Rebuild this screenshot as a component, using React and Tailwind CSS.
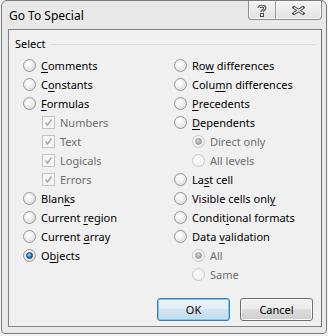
const left = [
  { label: "Comments", key: 0 },
  { label: "Constants", key: 1 },
  { label: "Formulas", key: 0 },
  { label: "Numbers", check: true },
  { label: "Text", check: true },
  { label: "Logicals", check: true },
  { label: "Errors", check: true },
  { label: "Blanks", key: 4 },
  { label: "Current region", key: 8 },
  { label: "Current array", key: 8 },
  { label: "Objects", key: 1, on: true },
];

const right = [
  { label: "Row differences", key: 2 },
  { label: "Column differences", key: 4 },
  { label: "Precedents", key: 0 },
  { label: "Dependents", key: 0 },
  { label: "Direct only", sub: true, on: true },
  { label: "All levels", sub: true },
  { label: "Last cell", key: 2 },
  { label: "Visible cells only", key: 17 },
  { label: "Conditional formats", key: 6 },
  { label: "Data validation", key: 5 },
  { label: "All", sub: true, on: true },
  { label: "Same", sub: true },
];

function Radio({ on, disabled }) {
  return (
    <span
      className={`w-[13px] h-[13px] rounded-full border flex items-center justify-center shrink-0 ${
        disabled
          ? "border-[#c9c9c9] bg-[radial-gradient(circle_at_40%_35%,#fbfbfb,#ececec)]"
          : "border-[#979797] bg-[radial-gradient(circle_at_40%_35%,#ffffff_10%,#d4d4d4)]"
      }`}
    >
      {on && (
        <span
          className={`w-[7px] h-[7px] rounded-full ${
            disabled
              ? "bg-[radial-gradient(circle_at_40%_35%,#d8d8d8,#8c8c8c)] border border-[#9a9a9a]"
              : "bg-[radial-gradient(circle_at_40%_35%,#a6e4ff,#2a86c8_50%,#0c3f6b)] border border-[#0d3b63]"
          }`}
        />
      )}
    </span>
  );
}

function Check() {
  return (
    <span className="w-[13px] h-[13px] border border-[#c4c4c4] bg-[#f6f6f6] flex items-center justify-center shrink-0">
      <svg width="9" height="9" viewBox="0 0 9 9">
        <path d="M1.5 4.5 L3.5 7 L7.5 1.5" fill="none" stroke="#a8a8a8" strokeWidth="1.4" />
      </svg>
    </span>
  );
}

function Label({ text, k, disabled }) {
  if (k === undefined) {
    return <span className={disabled ? "text-[#6d6d6d]" : "text-black"}>{text}</span>;
  }
  return (
    <span className="text-black">
      {text.slice(0, k)}
      <span className="underline underline-offset-[2px] decoration-1">{text[k]}</span>
      {text.slice(k + 1)}
    </span>
  );
}

function Row({ item }) {
  const indent = item.check ? "pl-[19px]" : item.sub ? "pl-[18px]" : "";
  return (
    <div className={`h-[19px] flex items-center gap-[5px] ${indent}`}>
      {item.check ? <Check /> : <Radio on={item.on} disabled={item.sub} />}
      <Label text={item.label} k={item.key} disabled={item.check || item.sub} />
    </div>
  );
}

function Glyph({ type }) {
  if (type === "help") {
    return (
      <svg width="10" height="13" viewBox="0 0 10 13">
        <path d="M2 4 C2 1.5 8 1.5 8 4 C8 6 5 6 5 8" fill="none" stroke="#4a4a4a" strokeWidth="3" />
        <path d="M2 4 C2 1.5 8 1.5 8 4 C8 6 5 6 5 8" fill="none" stroke="#ffffff" strokeWidth="1" />
        <rect x="3.5" y="9.5" width="3" height="3" fill="#fff" stroke="#4a4a4a" />
      </svg>
    );
  }
  return (
    <svg width="13" height="9" viewBox="0 0 13 9">
      <path d="M2 1.5 L11 7.5 M11 1.5 L2 7.5" fill="none" stroke="#4a4a4a" strokeWidth="3.2" strokeLinecap="square" />
      <path d="M2 1.5 L11 7.5 M11 1.5 L2 7.5" fill="none" stroke="#ffffff" strokeWidth="1.2" />
    </svg>
  );
}

export default function App() {
  return (
    <div
      className="w-[328px] h-[336px] bg-[#f3f3f3] text-[11px] leading-[16px]"
      style={{ fontFamily: '"Noto Sans", "Open Sans", sans-serif' }}
    >
      <div className="ml-[1px] w-[326px] h-[334px] border border-[#7b7b7b] rounded-t-[6px] rounded-b-[4px] bg-[#e9e9e9] flex flex-col">
        <div className="h-[28px] flex items-start justify-between">
          <span className="ml-[7px] mt-[7px] text-[12px] text-black">Go To Special</span>
          <div className="mr-[4px] flex border-x border-b border-[#8c8c8c] rounded-b-[4px] overflow-hidden bg-[linear-gradient(#f5f5f5,#e2e2e2)] shadow-[inset_0_0_0_1px_#fafafa]">
            <div className="w-[27px] h-[18px] border-r border-[#9c9c9c] flex items-center justify-center">
              <Glyph type="help" />
            </div>
            <div className="w-[45px] h-[18px] flex items-center justify-center">
              <Glyph type="close" />
            </div>
          </div>
        </div>

        <div className="ml-[6px] mr-[4px] h-[298px] border border-[#828282] border-r-[#6f6f6f] bg-[#f0f0f0] flex flex-col">
          <div className="mt-[6px] h-[16px] pl-[6px] pr-[5px] flex items-center gap-[4px]">
            <span className="text-black">Select</span>
            <span className="flex-1 h-px bg-[#d5dfe5]" />
          </div>

          <div className="mt-[4px] pl-[14px] flex">
            <div className="w-[151px] flex flex-col">
              {left.map((it) => (
                <Row key={it.label} item={it} />
              ))}
            </div>
            <div className="flex flex-col">
              {right.map((it) => (
                <Row key={it.label} item={it} />
              ))}
            </div>
          </div>

          <div className="mt-auto mb-[5px] pr-[8px] flex justify-end gap-[10px]">
            <button className="w-[73px] h-[23px] rounded-[3px] border border-[#3c7fb1] bg-[linear-gradient(#ecf4fb_0%,#e4eef8_50%,#d2e4f3_50%,#c5dbee_100%)] shadow-[inset_0_0_0_1px_#6fd0f6] text-black">
              OK
            </button>
            <button className="w-[73px] h-[23px] rounded-[3px] border border-[#707070] bg-[linear-gradient(#f2f2f2_0%,#ebebeb_50%,#dddddd_50%,#cfcfcf_100%)] shadow-[inset_0_0_0_1px_#fcfcfc] text-black">
              Cancel
            </button>
          </div>
        </div>
      </div>
    </div>
  );
}
